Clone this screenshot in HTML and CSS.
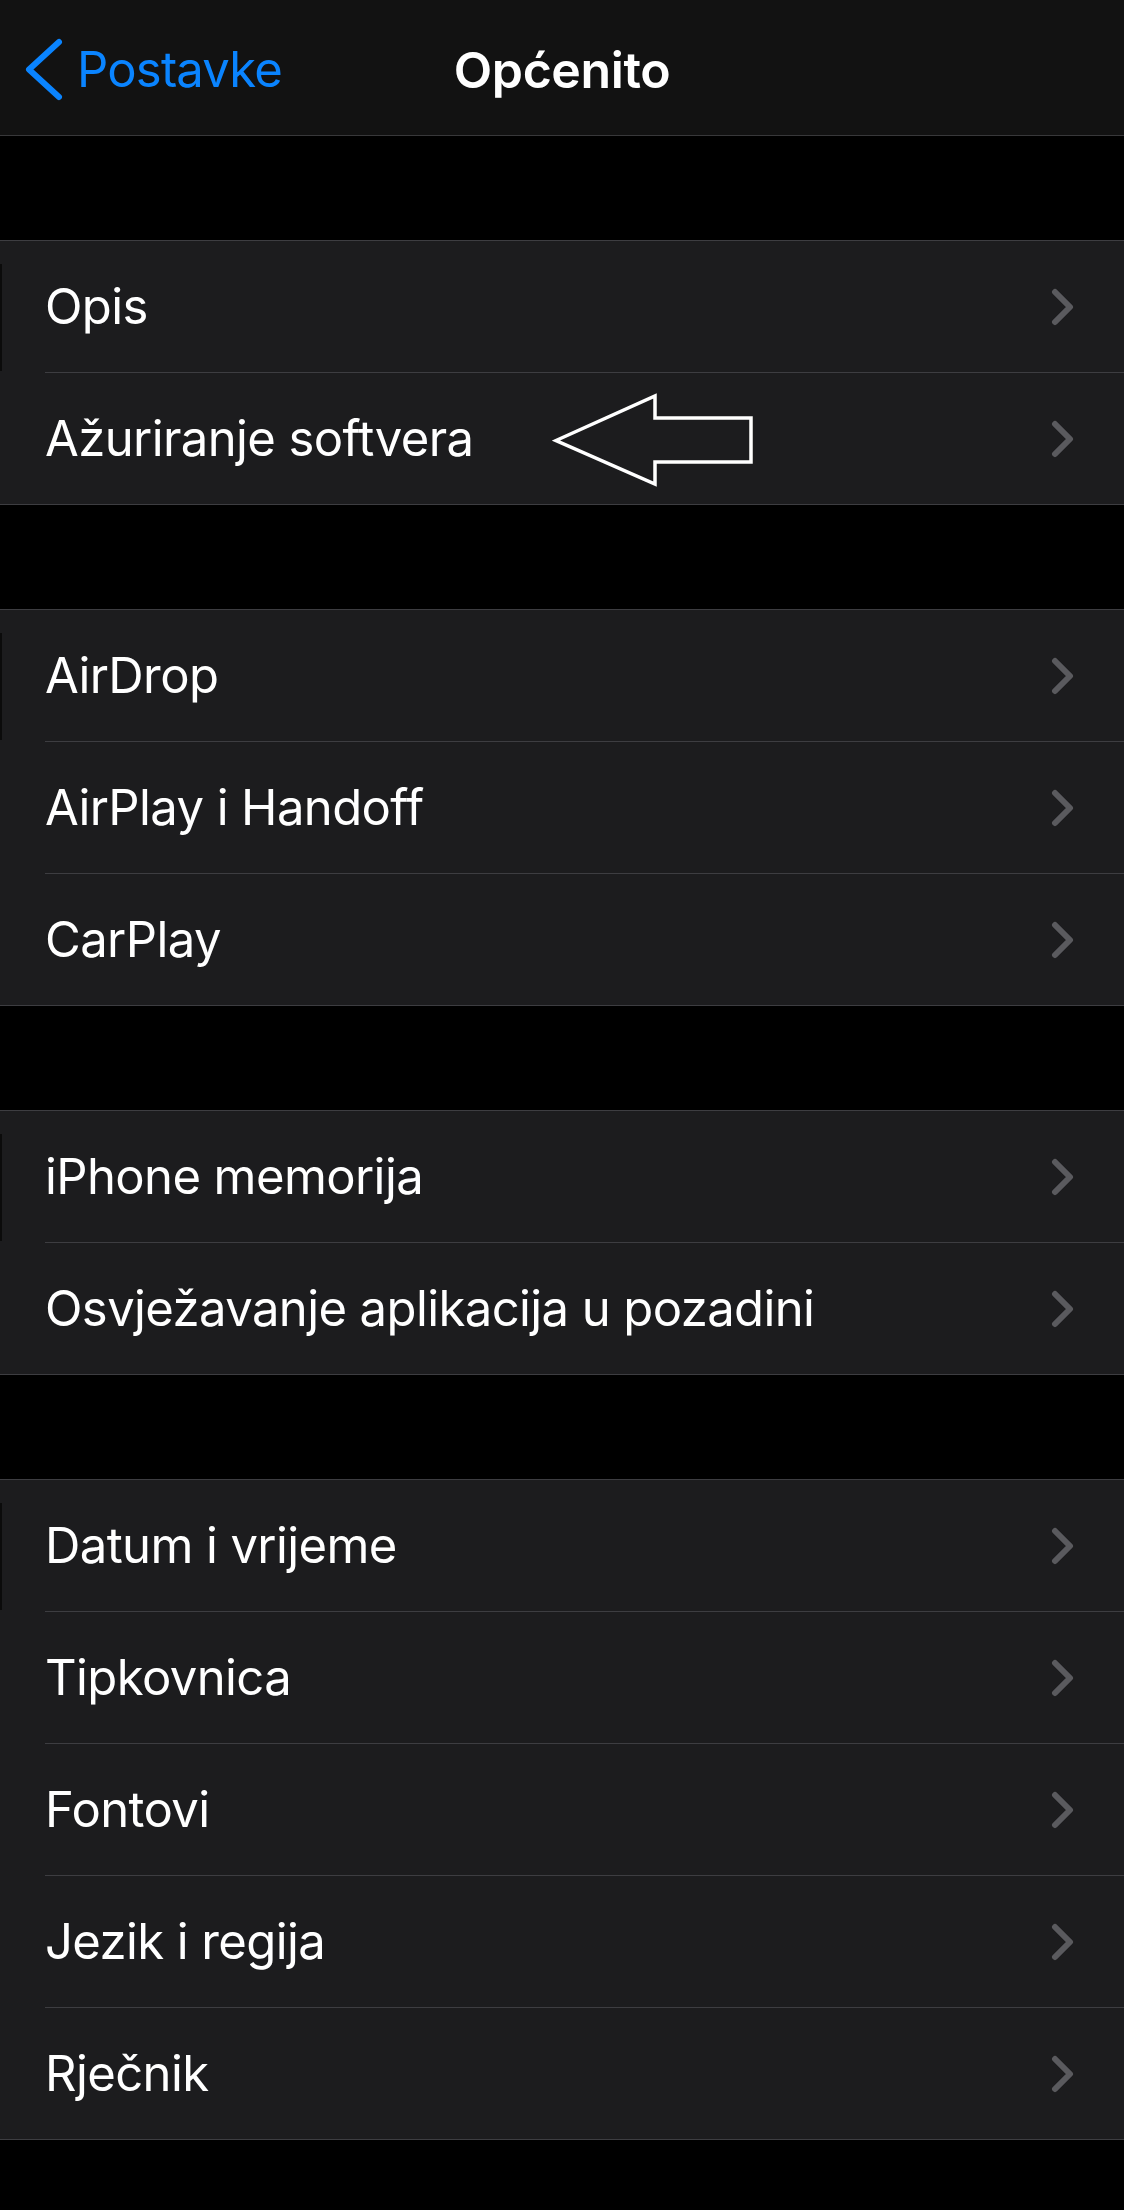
FILE: index.html
```html
<!DOCTYPE html>
<html lang="hr">
<head>
    <meta charset="UTF-8">
    <meta name="viewport" content="width=device-width, initial-scale=1.0">
    <title>Općenito</title>
    <link rel="stylesheet" href="styles.css">
</head>
<body>
    <header class="navbar">
        <a class="back" href="#">
            <svg class="back-icon" width="40" height="66" viewBox="0 0 40 66">
                <path d="M35 5 L5 32.5 L35 60" />
            </svg>
            <span>Postavke</span>
        </a>
        <h1 class="title">Općenito</h1>
        <div></div>
    </header>

    <main class="settings">
        <div class="gap"></div>
        <ul class="group">
            <li class="row"><div class="row-inner"><span class="label">Opis</span><svg class="chevron" width="24" height="38" viewBox="0 0 24 38"><path d="M4 4 L19 19 L4 34" /></svg></div></li>
            <li class="row">
                <div class="row-inner"><span class="label">Ažuriranje softvera</span><svg class="chevron" width="24" height="38" viewBox="0 0 24 38"><path d="M4 4 L19 19 L4 34" /></svg></div>
                <!-- hand-drawn pointer over the row -->
                <svg class="pointer" width="204" height="96" viewBox="0 0 204 96">
                    <path d="M4 47.5 L103 3 L103 25 L199 25 L199 69 L103 69 L103 91 Z" />
                </svg>
            </li>
        </ul>

        <div class="gap"></div>
        <ul class="group">
            <li class="row"><div class="row-inner"><span class="label">AirDrop</span><svg class="chevron" width="24" height="38" viewBox="0 0 24 38"><path d="M4 4 L19 19 L4 34" /></svg></div></li>
            <li class="row"><div class="row-inner"><span class="label">AirPlay i Handoff</span><svg class="chevron" width="24" height="38" viewBox="0 0 24 38"><path d="M4 4 L19 19 L4 34" /></svg></div></li>
            <li class="row"><div class="row-inner"><span class="label">CarPlay</span><svg class="chevron" width="24" height="38" viewBox="0 0 24 38"><path d="M4 4 L19 19 L4 34" /></svg></div></li>
        </ul>

        <div class="gap"></div>
        <ul class="group">
            <li class="row"><div class="row-inner"><span class="label">iPhone memorija</span><svg class="chevron" width="24" height="38" viewBox="0 0 24 38"><path d="M4 4 L19 19 L4 34" /></svg></div></li>
            <li class="row"><div class="row-inner"><span class="label">Osvježavanje aplikacija u pozadini</span><svg class="chevron" width="24" height="38" viewBox="0 0 24 38"><path d="M4 4 L19 19 L4 34" /></svg></div></li>
        </ul>

        <div class="gap"></div>
        <ul class="group">
            <li class="row"><div class="row-inner"><span class="label">Datum i vrijeme</span><svg class="chevron" width="24" height="38" viewBox="0 0 24 38"><path d="M4 4 L19 19 L4 34" /></svg></div></li>
            <li class="row"><div class="row-inner"><span class="label">Tipkovnica</span><svg class="chevron" width="24" height="38" viewBox="0 0 24 38"><path d="M4 4 L19 19 L4 34" /></svg></div></li>
            <li class="row"><div class="row-inner"><span class="label">Fontovi</span><svg class="chevron" width="24" height="38" viewBox="0 0 24 38"><path d="M4 4 L19 19 L4 34" /></svg></div></li>
            <li class="row"><div class="row-inner"><span class="label">Jezik i regija</span><svg class="chevron" width="24" height="38" viewBox="0 0 24 38"><path d="M4 4 L19 19 L4 34" /></svg></div></li>
            <li class="row"><div class="row-inner"><span class="label">Rječnik</span><svg class="chevron" width="24" height="38" viewBox="0 0 24 38"><path d="M4 4 L19 19 L4 34" /></svg></div></li>
        </ul>
    </main>
</body>
</html>
```

FILE: styles.css
```css
body {
    font-family: Inter, "Noto Sans", sans-serif;
    margin: 0;
    padding: 0;
    background-color: #000;
    color: #fff;
}

.navbar {
    display: grid;
    grid-template-columns: 1fr auto 1fr;
    align-items: center;
    height: 131px;
    padding: 4px 24px 0;
    background-color: #121212;
    border-bottom: 1px solid #38383a;
}

.back {
    display: flex;
    align-items: center;
    gap: 13px;
    color: #0a84ff;
    text-decoration: none;
    font-size: 49px;
    letter-spacing: -0.8px;
}

.back-icon path {
    fill: none;
    stroke: #0a84ff;
    stroke-width: 6;
    stroke-linecap: round;
    stroke-linejoin: round;
}

.title {
    margin: 0;
    font-size: 50px;
    font-weight: 600;
    letter-spacing: -0.4px;
}

.gap {
    height: 104px;
}

.group {
    list-style: none;
    margin: 0;
    padding: 0;
    border-top: 1px solid #3d3d41;
    border-bottom: 1px solid #3d3d41;
}

.row {
    position: relative;
    padding-left: 45px;
    background-color: #1c1c1e;
}

.row:first-child::before {
    content: "";
    position: absolute;
    left: 0;
    top: 23px;
    bottom: 2px;
    width: 2px;
    background-color: #0b0b0b;
}

.row-inner {
    display: flex;
    align-items: center;
    height: 131px;
    padding-right: 49px;
    border-bottom: 1px solid #3d3d41;
}

.row:last-child .row-inner {
    border-bottom: none;
}

.label {
    flex: 1;
    font-size: 49px;
    letter-spacing: -0.6px;
}

.chevron path {
    fill: none;
    stroke: #5a5a5e;
    stroke-width: 6;
    stroke-linecap: round;
    stroke-linejoin: round;
}

.pointer {
    position: absolute;
    left: 552px;
    top: 20px;
}

.pointer path {
    fill: none;
    stroke: #fff;
    stroke-width: 3.5;
}
```
